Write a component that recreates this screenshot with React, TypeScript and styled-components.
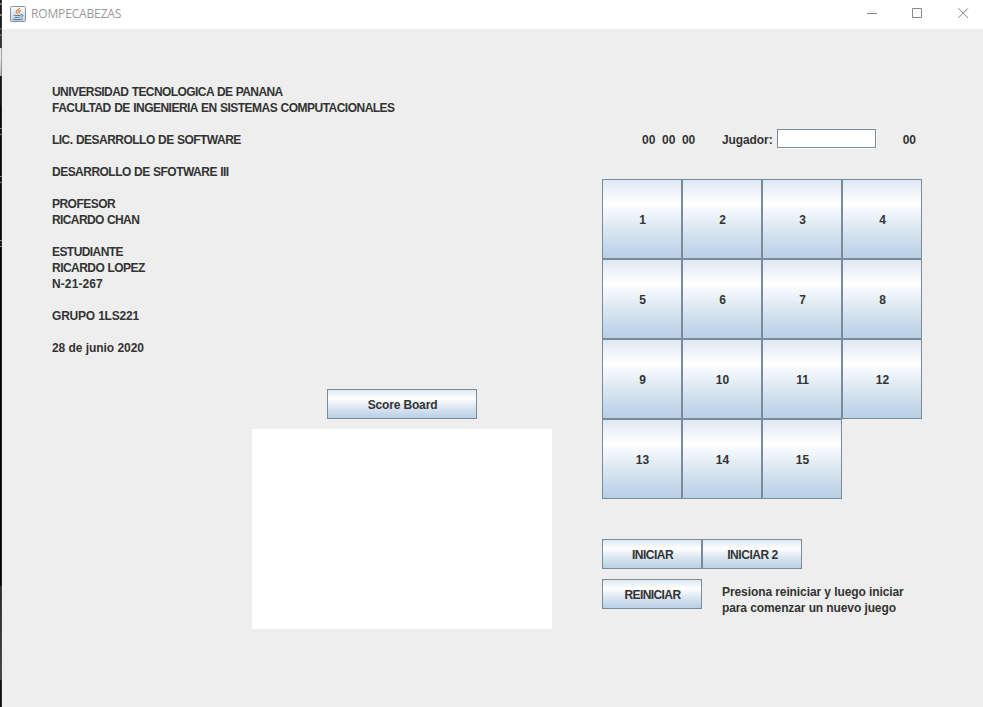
import React from "react";
import styled, { createGlobalStyle } from "styled-components";

const GlobalStyle = createGlobalStyle`
  * { box-sizing: border-box; }
  html, body { margin: 0; padding: 0; overflow: hidden; }
  body { background: #eeeeee; }
`;

const Screen = styled.div`
  display: flex;
  width: 983px;
  height: 707px;
  background: #eeeeee;
  color: #333333;
  font: bold 12px/16px "Liberation Sans", Arial, sans-serif;
`;

const DesktopEdge = styled.div`
  flex: 0 0 2px;
  border-right: 1px solid #55555577;
  background: linear-gradient(
    180deg,
    #1a1a1c 0 3px, #77777b 3px 5px, #1a1a1c 5px 14px, #8a8a8c 14px 16px, #1c1c1e 16px 28px,
    #555 28px 30px, #222 30px 34px, #666 34px 36px, #333 36px 48px,
    #e6e6e6 48px 60px, #b5b5b5 76px, #141416 76px 105px, #05070c 106px 128px,
    #888 128px 129px, #05070c 129px 134px, #888 134px 135px, #05070c 135px 176px,
    #888 176px 177px, #05070c 177px 182px, #888 182px 183px, #05070c 183px 240px,
    #888 240px 241px, #05070c 241px 246px, #888 246px 247px, #000 247px 586px,
    #333 586px 588px, #2a2a2a 588px, #444 680px, #0c0c0c 680px 707px
  );
`;

const Window = styled.div`
  flex: 1;
  display: flex;
  flex-direction: column;
`;

const TitleBar = styled.header`
  flex: 0 0 29px;
  display: flex;
  align-items: center;
  padding: 0 14px 2px 8px;
  background: #ffffff;
`;

const Title = styled.span`
  flex: 1;
  margin-left: 5px;
  color: #999999;
  font: 400 12px/16px "Open Sans", "Noto Sans", sans-serif;
  letter-spacing: -0.15px;
`;

const WindowControls = styled.div`
  display: flex;
  gap: 35px;
  svg { display: block; }
`;

const Content = styled.main`
  flex: 1;
  display: flex;
`;

const LeftPane = styled.section`
  width: 550px;
  padding: 55px 0 0 50px;
`;

const Info = styled.div`
  height: 305px;
`;

const Line = styled.div<{ $spacing?: number; $word?: number }>`
  height: 16px;
  white-space: pre;
  letter-spacing: ${(p) => p.$spacing ?? 0}px;
  word-spacing: ${(p) => p.$word ?? 0}px;
`;

const ScoreSection = styled.div`
  display: flex;
  flex-direction: column;
  align-items: center;
  gap: 10px;
  width: 300px;
  margin-left: 200px;
`;

const ScoreArea = styled.div`
  width: 300px;
  height: 200px;
  background: #ffffff;
`;

const MetalButton = styled.button<{ $w: number; $h: number; $spacing?: number }>`
  width: ${(p) => p.$w}px;
  height: ${(p) => p.$h}px;
  padding: 2px 0 0 1px;
  border: 1px solid #7a8a99;
  border-radius: 0;
  background: linear-gradient(180deg, #dde8f3 0%, #ffffff 30%, #dde8f3 60%, #b8cfe5 100%);
  color: #333333;
  font: inherit;
  letter-spacing: ${(p) => p.$spacing ?? 0}px;
`;

const RightPane = styled.section`
  display: flex;
  flex-direction: column;
  width: 320px;
  margin-left: 50px;
  padding-top: 100px;
`;

const StatusRow = styled.div`
  display: flex;
  align-items: flex-start;
  height: 20px;
  margin-bottom: 30px;
  padding: 0 6px 0 40px;
`;

const Timer = styled.div`
  display: flex;
  gap: 6.6px;
  width: 80px;
  padding-top: 3px;
`;

const PlayerLabel = styled.label`
  display: flex;
  align-items: flex-start;
  width: 154px;
  justify-content: space-between;
`;

const LabelText = styled.span`
  padding-top: 3px;
  letter-spacing: -0.1px;
`;

const PlayerInput = styled.input`
  width: 99px;
  height: 19px;
  padding: 0 3px;
  border: 1px solid #7a8a99;
  border-radius: 0;
  outline: none;
  background: #ffffff;
  box-shadow: 1px 1px 0 #ffffff;
  font: inherit;
  font-weight: 400;
`;

const Moves = styled.span`
  margin-left: auto;
  padding-top: 3px;
`;

const Board = styled.div`
  display: grid;
  grid-template-columns: repeat(4, 80px);
  grid-auto-rows: 80px;
  height: 320px;
  margin-bottom: 40px;
`;

const ButtonRow = styled.div`
  display: flex;
  margin-bottom: 10px;
`;

const Hint = styled.div`
  padding-top: 5px;
  margin-left: 20px;
`;

type InfoLine = [text: string, spacing?: number, word?: number];

const info: InfoLine[] = [
  ["UNIVERSIDAD TECNOLOGICA DE PANANA", -0.57, 0.5],
  ["FACULTAD DE INGENIERIA EN SISTEMAS COMPUTACIONALES", -0.52, 0.6],
  [""],
  ["LIC. DESARROLLO DE SOFTWARE", -0.52, 0.5],
  [""],
  ["DESARROLLO DE SFOTWARE III", -0.52, 0.5],
  [""],
  ["PROFESOR", -0.53],
  ["RICARDO CHAN", -0.6, 0.4],
  [""],
  ["ESTUDIANTE", -0.57],
  ["RICARDO LOPEZ", -0.54, 0.5],
  ["N-21-267", 0.1],
  [""],
  ["GRUPO 1LS221", -0.2],
  [""],
  ["28 de junio 2020", -0.05],
];

const tiles = Array.from({ length: 15 }, (_, i) => i + 1);

const JavaIcon = () => (
  <svg width="16" height="16" viewBox="0 0 16 16">
    <defs>
      <linearGradient id="cupPlate" x1="0" y1="0" x2="0" y2="1">
        <stop offset="0" stopColor="#fdfdfe" />
        <stop offset="1" stopColor="#c3d0dc" />
      </linearGradient>
    </defs>
    <rect x="0.5" y="0.5" width="15" height="15" rx="1" fill="url(#cupPlate)" stroke="#7e95aa" />
    <path d="M9.6 2C9.6 3.8 5.6 4.6 6.1 6.3C6.4 7 7.2 7.2 7.2 8M11 4.5C8.8 5 8.2 5.8 8.9 6.6C9.2 7.1 9 7.5 8.7 7.9" fill="none" stroke="#e58a3c" strokeWidth="1.3" />
    <path d="M3.8 9.2C5.4 9.8 9 9.7 10.8 9.2M4.8 11.2C6.4 11.7 8.6 11.6 9.9 11.2M11 8.8C13.6 8 13.4 10.6 10.8 11.2M2.8 13C4.8 13.9 10.4 13.8 12.6 12.9" fill="none" stroke="#45719c" strokeWidth="1" />
  </svg>
);

export default function App() {
  return (
    <>
      <GlobalStyle />
      <Screen>
        <DesktopEdge />
        <Window>
          <TitleBar>
            <JavaIcon />
            <Title>ROMPECABEZAS</Title>
            <WindowControls>
              <svg width="11" height="11" viewBox="0 0 11 11"><path d="M1 5.5H11" stroke="#888" /></svg>
              <svg width="11" height="11" viewBox="0 0 11 11"><path d="M.5.5H9.5V9.5H.5Z" fill="none" stroke="#888" /></svg>
              <svg width="11" height="11" viewBox="0 0 11 11"><path d="M.3.3L10 10M10 .3L.3 10" stroke="#888" /></svg>
            </WindowControls>
          </TitleBar>
          <Content>
            <LeftPane>
              <Info>
                {info.map(([text, spacing, word], i) => (
                  <Line key={i} $spacing={spacing} $word={word}>{text}</Line>
                ))}
              </Info>
              <ScoreSection>
                <MetalButton $w={150} $h={30} $spacing={-0.15}>Score Board</MetalButton>
                <ScoreArea />
              </ScoreSection>
            </LeftPane>
            <RightPane>
              <StatusRow>
                <Timer><span>00</span><span>00</span><span>00</span></Timer>
                <PlayerLabel><LabelText>Jugador:</LabelText><PlayerInput /></PlayerLabel>
                <Moves>00</Moves>
              </StatusRow>
              <Board>
                {tiles.map((n) => <MetalButton key={n} $w={80} $h={80}>{n}</MetalButton>)}
              </Board>
              <ButtonRow>
                <MetalButton $w={100} $h={30} $spacing={-0.5}>INICIAR</MetalButton>
                <MetalButton $w={100} $h={30} $spacing={-0.45}>INICIAR 2</MetalButton>
              </ButtonRow>
              <ButtonRow>
                <MetalButton $w={100} $h={30} $spacing={-0.6}>REINICIAR</MetalButton>
                <Hint>
                  <Line $spacing={-0.09}>Presiona reiniciar y luego iniciar</Line>
                  <Line $spacing={-0.1}>para comenzar un nuevo juego</Line>
                </Hint>
              </ButtonRow>
            </RightPane>
          </Content>
        </Window>
      </Screen>
    </>
  );
}
